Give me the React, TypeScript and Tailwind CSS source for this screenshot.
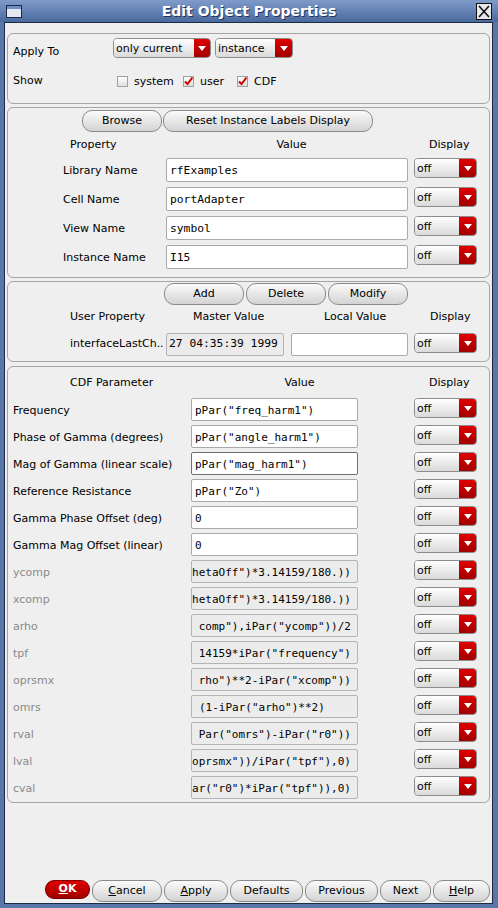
import React from "react";

const sans = "font-['DejaVu_Sans',sans-serif]";
const mono = "font-['DejaVu_Sans_Mono',monospace]";

const Caret = () => (
  <svg width="8" height="5" viewBox="0 0 8 5">
    <path d="M0 0H8L4 5Z" fill="#fff" />
  </svg>
);

const Dropdown = ({ value, className, redClass = "w-[17px]" }: { value: string; className: string; redClass?: string }) => (
  <div className={`flex h-[20px] shrink-0 overflow-hidden rounded-[4px] border border-[#8d8d8d] ${className}`}>
    <div className="flex flex-1 items-center bg-linear-to-b from-white to-[#dadada] pl-[2px] text-[11px] leading-none">{value}</div>
    <div className={`flex items-center justify-center bg-linear-to-b from-[#e00000] to-[#a20000] ${redClass}`}>
      <Caret />
    </div>
  </div>
);

const Check = ({ checked }: { checked?: boolean }) => (
  <div className="flex h-[11px] w-[11px] shrink-0 items-center justify-center border border-[#a0a0a0] bg-linear-to-b from-white to-[#e0e0e0]">
    {checked && (
      <svg width="9" height="9" viewBox="0 0 9 9">
        <path d="M1 4.5L3.5 7L8.5 0.5" stroke="#d00000" strokeWidth="2" fill="none" />
      </svg>
    )}
  </div>
);

const Btn = ({ children, className }: { children: React.ReactNode; className: string }) => (
  <div className={`flex h-[22px] shrink-0 items-center justify-center rounded-[10px] border border-[#8a8a8a] bg-linear-to-b from-[#fbfbfb] to-[#d3d3d3] text-[11px] ${className}`}>
    {children}
  </div>
);

const Field = ({ children, className }: { children?: React.ReactNode; className: string }) => (
  <div className={`flex shrink-0 items-center overflow-hidden whitespace-pre rounded-[2px] border ${mono} ${className}`}>
    {children}
  </div>
);

const props = [
  ["Library Name", "rfExamples"],
  ["Cell Name", "portAdapter"],
  ["View Name", "symbol"],
  ["Instance Name", "I15"],
];

type Row = { label: string; value: string; off?: boolean; right?: boolean; focus?: boolean; pad?: string };

// scrolled fields show only their visible tail
const cdf: Row[] = [
  { label: "Frequency", value: 'pPar("freq_harm1")' },
  { label: "Phase of Gamma (degrees)", value: 'pPar("angle_harm1")' },
  { label: "Mag of Gamma (linear scale)", value: 'pPar("mag_harm1")', focus: true },
  { label: "Reference Resistance", value: 'pPar("Zo")' },
  { label: "Gamma Phase Offset (deg)", value: "0" },
  { label: "Gamma Mag Offset (linear)", value: "0" },
  { label: "ycomp", value: 'hetaOff")*3.14159/180.))', off: true, right: true },
  { label: "xcomp", value: 'hetaOff")*3.14159/180.))', off: true, right: true },
  { label: "arho", value: 'comp"),iPar("ycomp"))/2', off: true, right: true },
  { label: "tpf", value: '14159*iPar("frequency")', off: true, right: true },
  { label: "oprsmx", value: 'rho")**2-iPar("xcomp"))', off: true, right: true },
  { label: "omrs", value: '(1-iPar("arho")**2)', off: true, pad: "pl-[7px]" },
  { label: "rval", value: 'Par("omrs")-iPar("r0"))', off: true, right: true },
  { label: "lval", value: 'oprsmx"))/iPar("tpf"),0)', off: true, right: true },
  { label: "cval", value: 'ar("r0")*iPar("tpf")),0)', off: true, right: true },
];

export default function App() {
  return (
    <div className={`flex h-[908px] w-[498px] flex-col bg-[#5876aa] ${sans} text-black`}>
      {/* Title bar */}
      <div className="flex h-[22px] shrink-0 items-center bg-linear-to-b from-[#7f9bca] to-[#4a699d]">
        <div className="ml-[6px] flex h-[13px] w-[16px] flex-col border border-[#1d2a44] bg-[#e4e9f1]">
          <div className="h-[3px] bg-[#6f8fc4]" />
        </div>
        <div className="flex-1 text-center text-[14px] font-bold text-white [text-shadow:1px_1px_0_#22355a]">Edit Object Properties</div>
        <div className="mr-[6px] flex h-[17px] w-[16px] items-center justify-center border border-[#111] bg-[#e6e8ee]">
          <svg width="12" height="13" viewBox="0 0 12 13">
            <path d="M1 1L11 12M11 1L1 12" stroke="#111" strokeWidth="1.6" />
          </svg>
        </div>
      </div>

      {/* Body */}
      <div className="flex flex-1 flex-col pb-[4px] pl-[4px] pr-[5px]">
        <div className="flex flex-1 flex-col border border-[#1c2a46] bg-[#efefef] px-[2px] pt-[10px] pb-[1px] text-[11px]">
          {/* Apply To / Show */}
          <div className="flex h-[71px] flex-col rounded-[6px] border border-[#a5a5a5] pl-[5px] pt-[4px]">
            <div className="flex h-[19px] items-start">
              <div className="mt-[7px] w-[100px] leading-[13px]">Apply To</div>
              <Dropdown value="only current" className="w-[98px]" redClass="w-[16px]" />
              <Dropdown value="instance" className="ml-[4px] w-[78px]" />
            </div>
            <div className="mt-[14px] flex h-[20px] items-center">
              <div className="w-[104px]">Show</div>
              <div className="flex w-[66px] items-center gap-[6px]">
                <Check />
                <span className="pt-[2px]">system</span>
              </div>
              <div className="flex w-[54px] items-center gap-[6px]">
                <Check checked />
                <span className="pt-[2px]">user</span>
              </div>
              <div className="flex items-center gap-[6px]">
                <Check checked />
                <span className="pt-[2px]">CDF</span>
              </div>
            </div>
          </div>

          {/* Properties */}
          <div className="mt-[3px] flex h-[171px] flex-col rounded-[6px] border border-[#a5a5a5] pt-[2px]">
            <div className="flex">
              <Btn className="ml-[74px] w-[80px]">Browse</Btn>
              <Btn className="ml-[1px] w-[210px]">Reset Instance Labels Display</Btn>
            </div>
            <div className="mt-[5px] flex h-[16px] items-center">
              <div className="w-[158px] pl-[62px]">Property</div>
              <div className="w-[242px] pl-[9px] text-center">Value</div>
              <div className="pl-[21px]">Display</div>
            </div>
            <div className="mt-[5px] flex flex-col gap-[5px]">
              {props.map(([l, v]) => (
                <div key={l} className="flex h-[24px]">
                  <div className="flex h-[24px] w-[158px] items-center pl-[55px] pt-[3px]">{l}</div>
                  <Field className="h-[24px] w-[242px] border-[#a9a9a9] bg-white pl-[3px] pt-[3px] text-[11.3px]">{v}</Field>
                  <Dropdown value="off" className="ml-[6px] w-[63px]" />
                </div>
              ))}
            </div>
          </div>

          {/* User properties */}
          <div className="mt-[3px] flex h-[81px] flex-col rounded-[6px] border border-[#a5a5a5] pt-[1px]">
            <div className="flex gap-[2px] pl-[156px]">
              <Btn className="w-[80px]">Add</Btn>
              <Btn className="w-[80px]">Delete</Btn>
              <Btn className="w-[80px]">Modify</Btn>
            </div>
            <div className="mt-[4px] flex h-[16px] items-center">
              <div className="w-[158px] pl-[62px]">User Property</div>
              <div className="w-[125px] pl-[27px]">Master Value</div>
              <div className="w-[124px] pl-[33px]">Local Value</div>
              <div className="pl-[15px]">Display</div>
            </div>
            <div className="mt-[8px] flex h-[23px]">
              <div className="flex h-[23px] w-[158px] items-center pl-[62px]">interfaceLastCh..</div>
              <Field className="h-[23px] w-[118px] items-end border-[#b4b4b4] bg-[#ebebeb] pb-[2px] pl-[2px] text-[11.3px]">27 04:35:39 1999</Field>
              <Field className="ml-[7px] h-[23px] w-[117px] border-[#a9a9a9] bg-white" />
              <Dropdown value="off" className="ml-[6px] w-[63px]" />
            </div>
          </div>

          {/* CDF parameters */}
          <div className="mt-[4px] flex h-[437px] flex-col rounded-[6px] border border-[#a5a5a5] pt-[8px]">
            <div className="flex h-[16px] items-center">
              <div className="w-[183px] pl-[62px]">CDF Parameter</div>
              <div className="w-[217px] text-center">Value</div>
              <div className="pl-[21px]">Display</div>
            </div>
            <div className="mt-[7px] flex flex-col gap-[4px]">
              {cdf.map((r) => (
                <div key={r.label} className="flex h-[23px]">
                  <div className={`flex h-[23px] w-[183px] items-center pl-[5px] pt-[4px] ${r.off ? "text-[#8a8a8a]" : ""}`}>{r.label}</div>
                  <Field
                    className={`h-[23px] w-[167px] pt-[4px] text-[11px] ${r.off ? "border-[#b4b4b4] bg-[#ececec]" : r.focus ? "border-[#707070] bg-white" : "border-[#a9a9a9] bg-white"} ${r.right ? "justify-end pr-[6px]" : r.pad ?? "pl-[3px]"}`}
                  >
                    {r.value}
                  </Field>
                  <Dropdown value="off" className="ml-[56px] w-[63px]" />
                </div>
              ))}
            </div>
          </div>

          <div className="flex-1" />

          {/* Bottom buttons */}
          <div className="flex gap-[2px] pl-[38px]">
            <div className="flex h-[19px] w-[49px] items-center justify-center rounded-[9px] border border-[#7a0000] bg-linear-to-b from-[#e00000] to-[#a00000] text-[11px] font-bold text-white">
              <span><u>O</u>K</span>
            </div>
            <Btn className="h-[19px] w-[70px]"><span><u>C</u>ancel</span></Btn>
            <Btn className="h-[19px] w-[64px]"><span><u>A</u>pply</span></Btn>
            <Btn className="h-[19px] w-[73px]">Defaults</Btn>
            <Btn className="h-[19px] w-[73px]">Previous</Btn>
            <Btn className="h-[19px] w-[51px]">Next</Btn>
            <Btn className="h-[19px] w-[57px]"><span><u>H</u>elp</span></Btn>
          </div>
        </div>
      </div>
    </div>
  );
}
